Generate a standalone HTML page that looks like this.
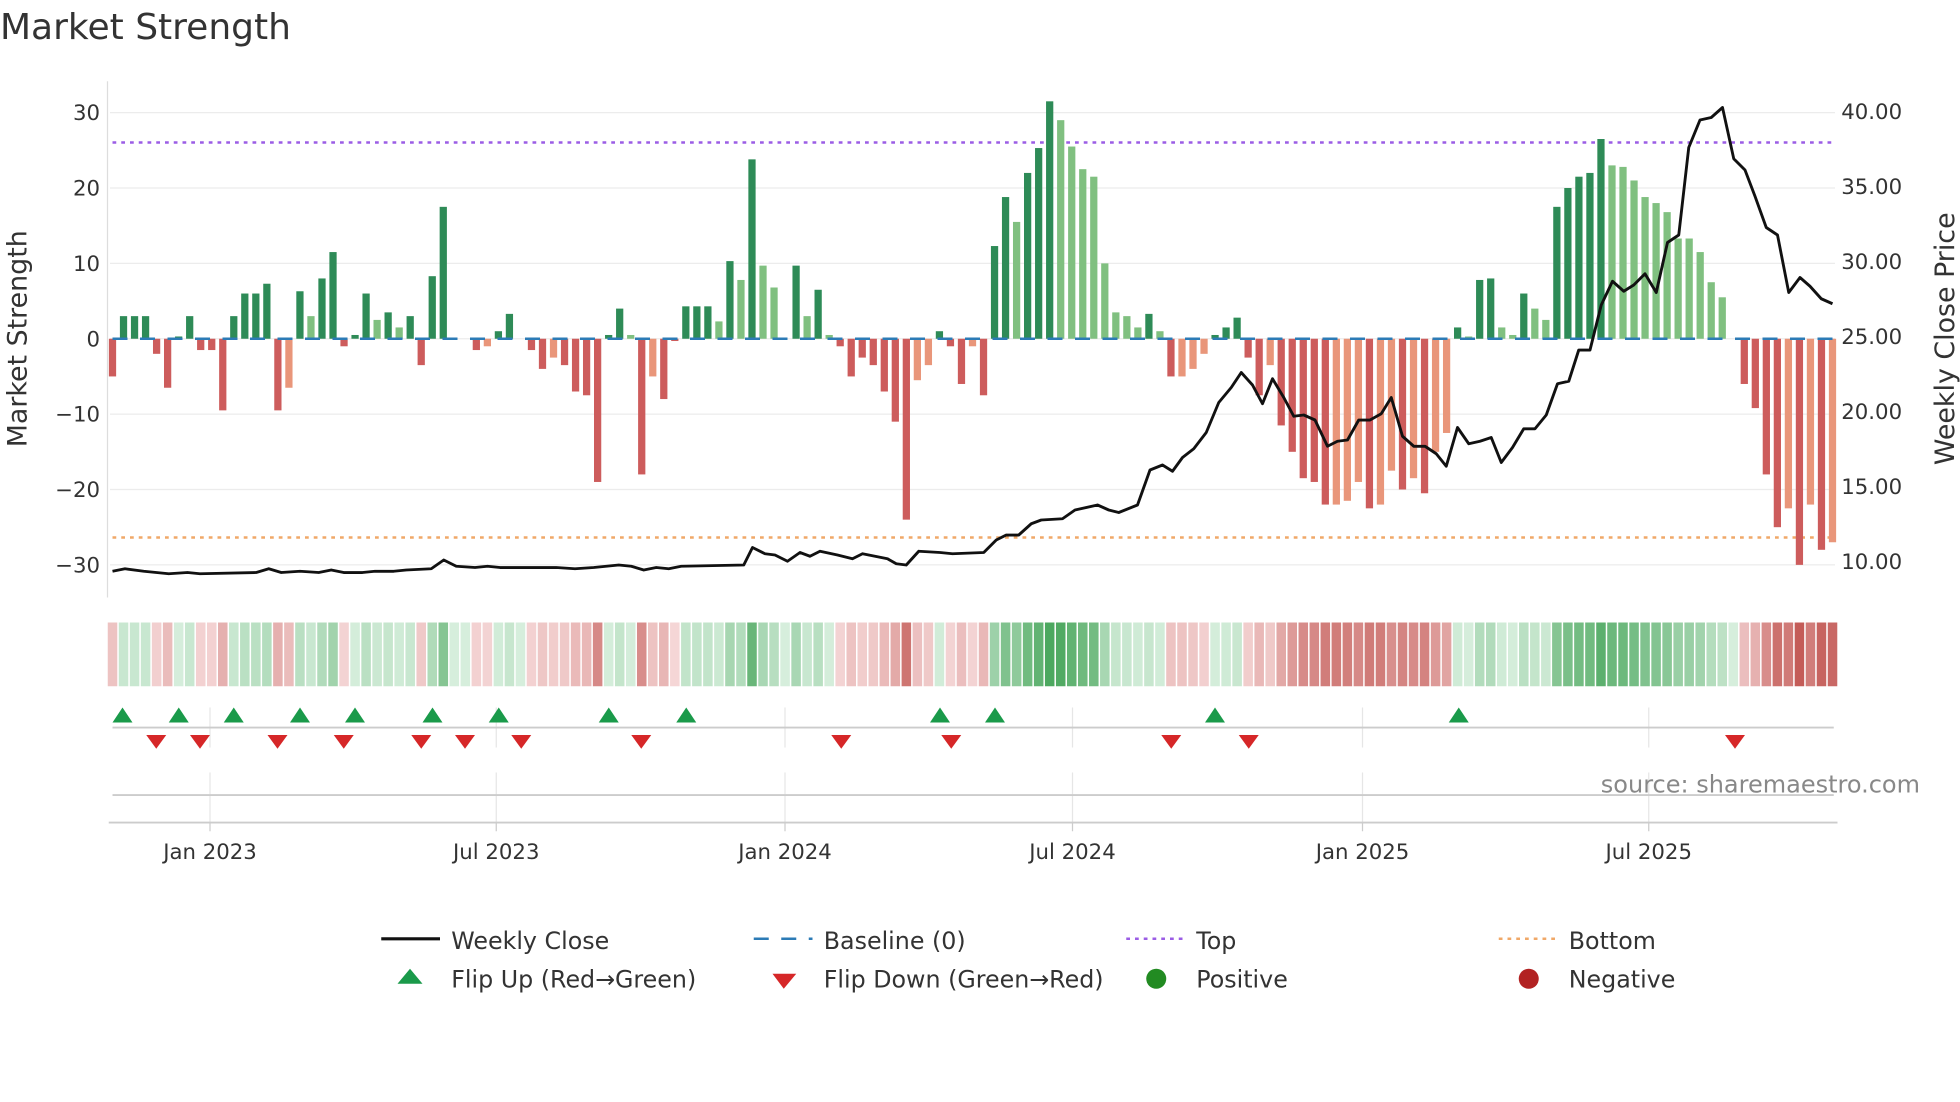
<!DOCTYPE html>
<html><head><meta charset="utf-8"><style>
html,body{margin:0;padding:0;background:#fff;width:1960px;height:1102px;overflow:hidden}
svg{display:block;font-family:"DejaVu Sans","Liberation Sans",sans-serif}
</style></head><body>
<svg id="s" width="1960" height="1102" viewBox="0 0 1568 881.6" xmlns="http://www.w3.org/2000/svg">
<rect width="1568" height="882" fill="#fff"/>
<text x="0" y="31" font-size="28.8" fill="#333">Market Strength</text>
<g id="grid" stroke="#ececec" stroke-width="1"></g>
<line x1="86" y1="65" x2="86" y2="478" stroke="#ddd" stroke-width="1"/>
<g id="ticks" font-size="17" fill="#333"></g>
<text transform="translate(21,271) rotate(-90)" text-anchor="middle" font-size="21.5" fill="#333">Market Strength</text>
<text transform="translate(1563,271) rotate(-90)" text-anchor="middle" font-size="21.5" fill="#333">Weekly Close Price</text>
<line x1="90" y1="114" x2="1468" y2="114" stroke="#9b5de5" stroke-width="2" stroke-dasharray="3 4"/>
<line x1="90" y1="430" x2="1468" y2="430" stroke="#f0a868" stroke-width="2" stroke-dasharray="3 4"/>
<g id="bars"></g>
<line x1="90" y1="271" x2="1468" y2="271" stroke="#2c7bb6" stroke-width="2" stroke-dasharray="12 10"/>
<polyline id="price" fill="none" stroke="#111" stroke-width="2.3" stroke-linejoin="round"/>
<g id="heat"></g>
<g stroke="#e6e6e6" stroke-width="1" id="vg"></g>
<line x1="90" y1="582" x2="1467" y2="582" stroke="#ccc" stroke-width="1.5"/>
<line x1="90" y1="636" x2="1467" y2="636" stroke="#ccc" stroke-width="1.5"/>
<line x1="87" y1="658" x2="1470" y2="658" stroke="#ccc" stroke-width="1.5"/>
<g id="tri"></g>
<text x="1536" y="634" text-anchor="end" font-size="19.2" fill="#888">source: sharemaestro.com</text>
<g id="xl" font-size="17" fill="#333" text-anchor="middle"></g>
<g font-size="19" fill="#333">
<line x1="305" y1="751" x2="352" y2="751" stroke="#111" stroke-width="2.5"/>
<text x="361" y="759">Weekly Close</text>
<line x1="603" y1="751" x2="650" y2="751" stroke="#2c7bb6" stroke-width="2" stroke-dasharray="12 10"/>
<text x="659" y="759">Baseline (0)</text>
<line x1="901" y1="751" x2="946" y2="751" stroke="#9b5de5" stroke-width="2" stroke-dasharray="3 4"/>
<text x="957" y="759">Top</text>
<line x1="1199" y1="751" x2="1244" y2="751" stroke="#f0a868" stroke-width="2" stroke-dasharray="3 4"/>
<text x="1255" y="759">Bottom</text>
<polygon points="328,775 338,787 318,787" fill="#1a9a4a"/>
<text x="361" y="790">Flip Up (Red→Green)</text>
<polygon points="618,779 637,779 627,791" fill="#d62728"/>
<text x="659" y="790">Flip Down (Green→Red)</text>
<circle cx="925" cy="783" r="8" fill="#228b22"/>
<text x="957" y="790">Positive</text>
<circle cx="1223" cy="783" r="8" fill="#b22222"/>
<text x="1255" y="790">Negative</text>
</g>
</svg>
<script>
var NS="http://www.w3.org/2000/svg";
function el(p,t,a,txt){var e=document.createElementNS(NS,t);for(var k in a)e.setAttribute(k,a[k]);if(txt!=null)e.textContent=txt;document.getElementById(p).appendChild(e);return e;}
var L=[30,20,10,0,-10,-20,-30],R=["40.00","35.00","30.00","25.00","20.00","15.00","10.00"];
for(var i=0;i<7;i++){var y=271-L[i]*6.03;el("grid","line",{x1:88,y1:y,x2:1468,y2:y});
el("ticks","text",{x:80,y:y+6,"text-anchor":"end"},String(L[i]).replace("-","−"));
el("ticks","text",{x:1473,y:89+i*60+6},R[i]);}
var v=[[-5,0],[3,0],[3,0],[3,0],[-2,0],[-6.5,0],[.3,0],[3,0],[-1.5,0],[-1.5,0],[-9.5,0],[3,0],[6,0],[6,0],[7.3,0],[-9.5,0],[-6.5,1],[6.3,0],[3,1],[8,0],[11.5,0],[-1,0],[.5,0],[6,0],[2.5,1],[3.5,0],[1.5,1],[3,0],[-3.5,0],[8.3,0],[17.5,0],[0,0],[0,0],[-1.5,0],[-1,1],[1,0],[3.3,0],[0,0],[-1.5,0],[-4,0],[-2.5,1],[-3.5,0],[-7,0],[-7.5,0],[-19,0],[.5,0],[4,0],[.5,1],[-18,0],[-5,1],[-8,0],[-.3,0],[4.3,0],[4.3,0],[4.3,0],[2.3,1],[10.3,0],[7.8,1],[23.8,0],[9.7,1],[6.8,1],[0,0],[9.7,0],[3,1],[6.5,0],[.5,1],[-1,0],[-5,0],[-2.5,0],[-3.5,0],[-7,0],[-11,0],[-24,0],[-5.5,1],[-3.5,1],[1,0],[-1,0],[-6,0],[-1,1],[-7.5,0],
[12.3,0],[18.8,0],[15.5,1],[22,0],[25.3,0],[31.5,0],[29,1],[25.5,1],[22.5,1],[21.5,1],[10,1],[3.5,1],[3,1],[1.5,1],[3.3,0],[1,1],[-5,0],[-5,1],[-4,1],[-2,1],[.5,0],[1.5,0],[2.8,0],[-2.5,0],[-7.5,0],[-3.5,1],[-11.5,0],[-15,0],[-18.5,0],[-19,0],[-22,0],[-22,1],[-21.5,1],[-19,1],[-22.5,0],[-22,1],[-17.5,1],[-20,0],[-18.5,1],[-20.5,0],[-15,1],[-12.5,1],[1.5,0],[.3,1],[7.8,0],[8,0],[1.5,1],[.5,1],[6,0],[4,1],[2.5,1],[17.5,0],[20,0],[21.5,0],[22,0],[26.5,0],[23,1],[22.8,1],[21,1],[18.8,1],[18,1],[16.8,1],[13.3,1],[13.3,1],[11.5,1],[7.5,1],[5.5,1],[0,0],[-6,0],[-9.2,0],[-18,0],[-25,0],[-22.5,1],[-30,0],[-22,1],[-28,0],[-27,1]];
var N=v.length,st=(1466-90)/(N-1);
function mix(a,b,t){return "rgb("+a.map(function(c,i){return Math.round(c+(b[i]-c)*t)}).join(",")+")";}
for(var i=0;i<N;i++){var x=90+i*st,val=v[i][0],h=Math.abs(val)*6.03,c;
if(val>=0)c=v[i][1]?"#80c080":"#2e8b57";else c=v[i][1]?"#e9967a":"#cd5c5c";
if(h>0.3)el("bars","rect",{x:x-2.9,y:val>=0?271-h:271,width:5.8,height:h,fill:c});
var t=Math.min(1,Math.abs(val)/30),hc=val>=0?mix([214,238,220],[76,168,95],t):mix([245,215,215],[196,92,88],t);
el("heat","rect",{x:x-4.4+0.6,y:498,width:st-1.2,height:51,fill:hc});}
var p=[[90,457],[100,455],[115,457],[135,459],[150,458],[160,459],[205,458],[215,455],[225,458],[240,457],[255,458],[265,456],[275,458],[290,458],[300,457],[315,457],[325,456],[345,455],[355,448],[365,453],[380,454],[390,453],[400,454],[445,454],[460,455],[475,454],[495,452],[505,453],[515,456],[525,454],[535,455],[545,453],[595,452],[602,438],[612,443],[620,444],[630,449],[640,442],[648,445],[656,441],[670,444],[682,447],[690,443],[700,445],[710,447],[717,451],[725,452],[735,441],[752,442],[762,443],[787,442],[797,432],[805,428],[815,428],[825,419],[833,416],[850,415],[860,408],[878,404],[887,408],[895,410],[910,404],[920,376],[930,372],[938,377],[946,366],[955,359],[965,346],[975,322],[985,310],[993,298],[1002,308],[1010,323],[1018,303],[1027,318],[1035,333],[1043,332],[1052,336],[1062,357],[1070,353],[1078,352],[1087,336],[1096,336],[1105,331],[1113,318],[1122,349],[1131,357],[1140,357],[1149,363],[1157,373],[1166,342],[1175,355],[1184,353],[1193,350],[1201,370],[1210,358],[1219,343],[1228,343],[1237,332],[1246,307],[1255,305],[1263,280],[1272,280],[1281,244],[1290,225],[1299,233],[1307,228],[1316,219],[1325,234],[1334,194],[1343,188],[1351,118],[1360,96],[1369,94],[1378,86],[1387,127],[1396,136],[1404,157],[1413,182],[1422,188],[1431,234],[1440,222],[1448,229],[1457,239],[1466,243]];
document.getElementById("price").setAttribute("points",p.map(function(q){return q.join(",")}).join(" "));
var ms=[[168,"Jan 2023"],[397,"Jul 2023"],[628,"Jan 2024"],[858,"Jul 2024"],[1090,"Jan 2025"],[1319,"Jul 2025"]];
ms.forEach(function(m){el("vg","line",{x1:m[0],y1:566,x2:m[0],y2:598});el("vg","line",{x1:m[0],y1:618,x2:m[0],y2:658});
el("vg","line",{x1:m[0],y1:658,x2:m[0],y2:665,stroke:"#ccc"});el("xl","text",{x:m[0],y:687},m[1]);});
[98,143,187,240,284,346,399,487,549,752,796,972,1167].forEach(function(x){el("tri","polygon",{points:(x)+",566 "+(x+8)+",578 "+(x-8)+",578",fill:"#1a9a4a"});});
[125,160,222,275,337,372,417,513,673,761,937,999,1388].forEach(function(x){el("tri","polygon",{points:(x-8)+",588 "+(x+8)+",588 "+x+",599",fill:"#d62728"});});
</script>
</body></html>
